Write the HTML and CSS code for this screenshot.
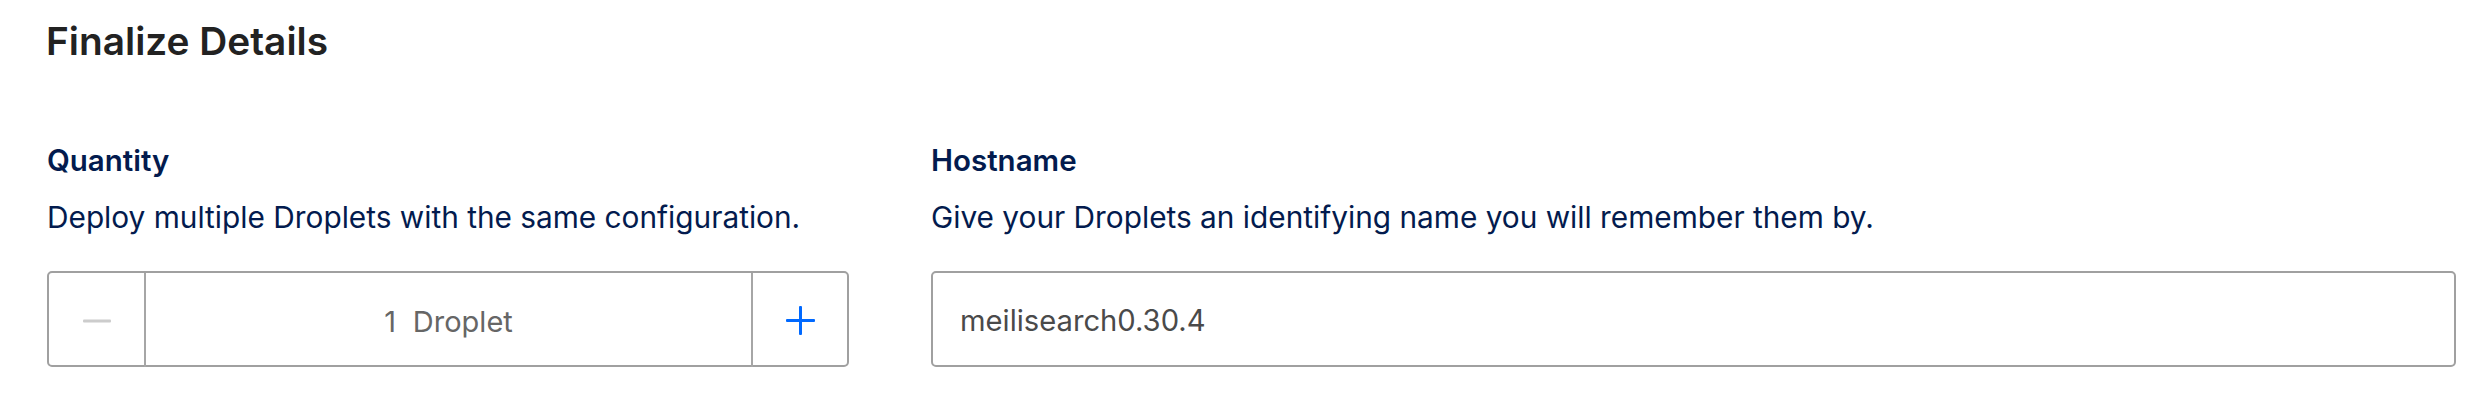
FILE: index.html
```html
<!DOCTYPE html>
<html lang="en">
<head>
<meta charset="utf-8">
<title>Finalize Details</title>
<link rel="stylesheet" href="styles.css">
</head>
<body>
<main class="page">
  <h2 class="title">Finalize Details</h2>
  <div class="fields">
    <section class="field field-qty">
      <h3 class="label">Quantity</h3>
      <p class="desc">Deploy multiple Droplets with the same configuration.</p>
      <div class="stepper">
        <button class="step-btn step-minus" type="button" aria-label="Decrease">
          <svg width="28" height="4" viewBox="0 0 28 4"><rect x="0" y="0.5" width="28" height="3" rx="1" fill="#cccccc"/></svg>
        </button>
        <div class="divider"></div>
        <div class="step-value">1 Droplet</div>
        <div class="divider"></div>
        <button class="step-btn step-plus" type="button" aria-label="Increase">
          <svg width="29" height="29" viewBox="0 0 29 29"><rect x="0" y="13" width="29" height="3" rx="1" fill="#0069ff"/><rect x="13" y="0" width="3" height="29" rx="1" fill="#0069ff"/></svg>
        </button>
      </div>
    </section>
    <section class="field field-host">
      <h3 class="label">Hostname</h3>
      <p class="desc">Give your Droplets an identifying name you will remember them by.</p>
      <div class="text-input">meilisearch0.30.4</div>
    </section>
  </div>
</main>
</body>
</html>
```
FILE: styles.css
```css
html, body {
  margin: 0;
  padding: 0;
  background: #ffffff;
}

.page {
  font-family: Inter, "Noto Sans", sans-serif;
  padding: 18px 31px 0 47px;
}

.title {
  margin: 0 0 0 -1px;
  font-size: 38.8px;
  line-height: 46px;
  font-weight: 600;
  color: #222222;
}

.fields {
  display: flex;
  gap: 82px;
  margin-top: 78px;
}

.field-qty {
  width: 802px;
  flex: none;
}

.field-host {
  flex: 1;
  min-width: 0;
}

.label {
  margin: 0;
  font-size: 29.5px;
  line-height: 36px;
  font-weight: 600;
  color: #031b4e;
}

.desc {
  margin: 21px 0 0;
  font-size: 29.8px;
  line-height: 36px;
  font-weight: 400;
  color: #031b4e;
}

.stepper {
  margin-top: 36px;
  height: 96px;
  box-sizing: border-box;
  border: 2px solid #a0a0a0;
  border-radius: 5px;
  display: flex;
  align-items: stretch;
}

.step-btn {
  width: 95px;
  flex: none;
  border: 0;
  background: transparent;
  padding: 3px 0 0;
  display: flex;
  align-items: center;
  justify-content: center;
  cursor: pointer;
}

.step-plus {
  width: 94px;
}

.divider {
  width: 2px;
  flex: none;
  background: #a6a6a6;
  margin-bottom: -4px;
}

.step-value {
  flex: 1;
  display: flex;
  align-items: center;
  justify-content: center;
  padding-top: 4px;
  font-size: 29px;
  word-spacing: 0.3em;
  color: #666666;
}

.text-input {
  margin-top: 36px;
  height: 96px;
  box-sizing: border-box;
  border: 2px solid #a0a0a0;
  border-radius: 5px;
  padding: 2px 0 0 27px;
  display: flex;
  align-items: center;
  font-size: 29.2px;
  color: #4a4a4a;
}
```
